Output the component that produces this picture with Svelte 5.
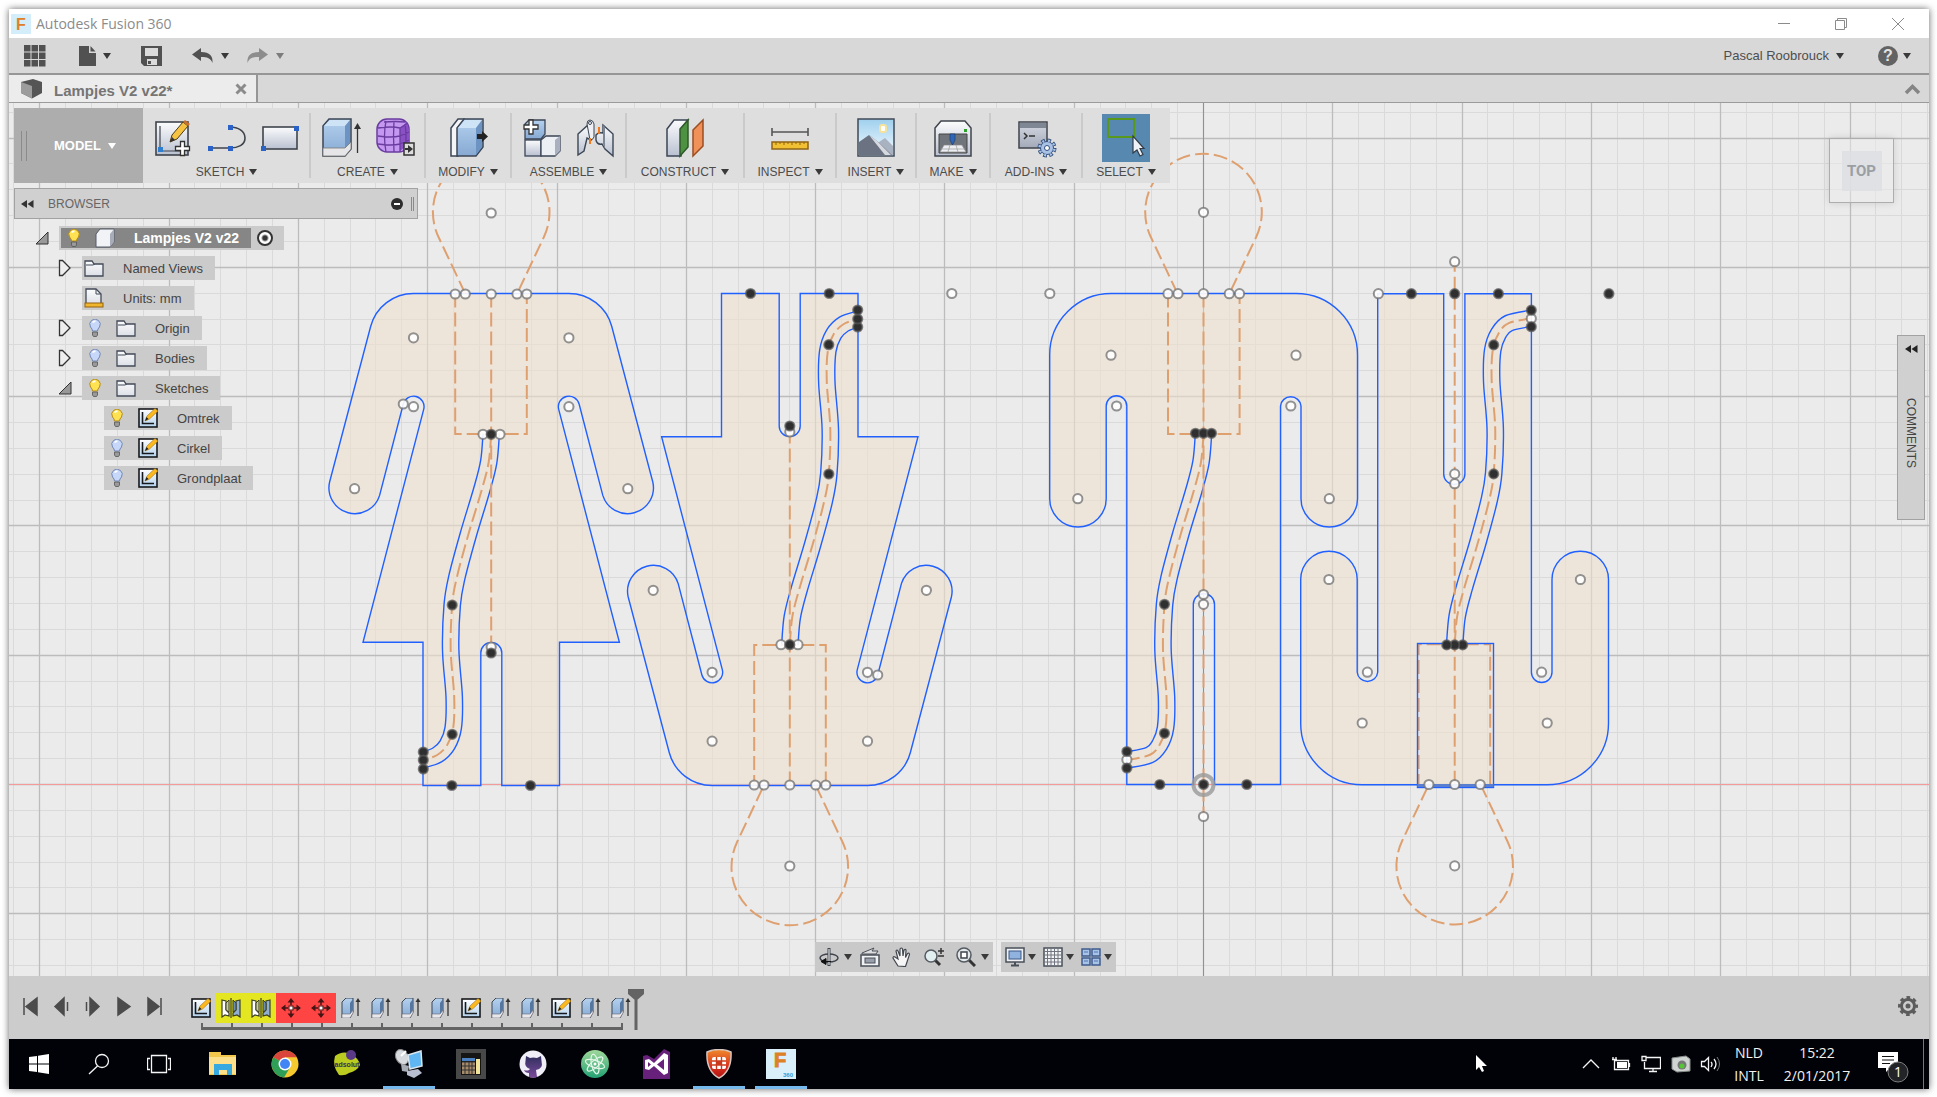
<script lang="ts">
	type Point = [number, number];

	const toolGroups = [
		{ label: 'SKETCH', width: 167, icons: ['sketch', 'line', 'rect'] },
		{ label: 'CREATE', width: 115, icons: ['extrude', 'form'] },
		{ label: 'MODIFY', width: 86, icons: ['press'] },
		{ label: 'ASSEMBLE', width: 115, icons: ['component', 'joint'] },
		{ label: 'CONSTRUCT', width: 118, icons: ['plane'] },
		{ label: 'INSPECT', width: 92, icons: ['measure'] },
		{ label: 'INSERT', width: 80, icons: ['image'] },
		{ label: 'MAKE', width: 74, icons: ['printer'] },
		{ label: 'ADD-INS', width: 92, icons: ['script'] },
		{ label: 'SELECT', width: 88, icons: ['select'] }
	];

	const tree = [
		{ label: 'Lampjes V2 v22', depth: 0, arrow: 'open', bulb: 'on', icon: 'cube', root: true },
		{ label: 'Named Views', depth: 1, arrow: 'closed', bulb: '', icon: 'folder' },
		{ label: 'Units: mm', depth: 1, arrow: '', bulb: '', icon: 'units' },
		{ label: 'Origin', depth: 1, arrow: 'closed', bulb: 'off', icon: 'folder' },
		{ label: 'Bodies', depth: 1, arrow: 'closed', bulb: 'off', icon: 'folder' },
		{ label: 'Sketches', depth: 1, arrow: 'open', bulb: 'on', icon: 'folder' },
		{ label: 'Omtrek', depth: 2, arrow: '', bulb: 'on', icon: 'smallSketch' },
		{ label: 'Cirkel', depth: 2, arrow: '', bulb: 'off', icon: 'smallSketch' },
		{ label: 'Grondplaat', depth: 2, arrow: '', bulb: 'off', icon: 'smallSketch' }
	];

	const features = [
		'smallSketch', 'mirror', 'mirror', 'move', 'move',
		'smallExtrude', 'smallExtrude', 'smallExtrude', 'smallExtrude', 'smallSketch',
		'smallExtrude', 'smallExtrude', 'smallSketch', 'smallExtrude', 'smallExtrude'
	];

	const playback = [
		{ label: 'Go to start', d: 'M3 2v17M5 10.5L16 2v17z' },
		{ label: 'Step back', d: 'M3 10.5L12 2v17zM15.5 6v9' },
		{ label: 'Step forward', d: 'M16 10.5L7 2v17zM3.5 6v9' },
		{ label: 'Play', d: 'M16 10.5L4 2v17z' },
		{ label: 'Go to end', d: 'M16 2v17M14 10.5L3 2v17z' }
	];

	const apps = [
		{ name: 'explorer', open: false },
		{ name: 'chrome', open: false },
		{ name: 'adsolut', open: false },
		{ name: 'remote', open: true },
		{ name: 'calculator', open: false },
		{ name: 'github', open: false },
		{ name: 'atom', open: false },
		{ name: 'visualstudio', open: false },
		{ name: 'shield', open: true },
		{ name: 'fusion', open: true }
	];

	// grid is centred on the sketch origin
	const origin = { x: 1203.5, y: 784.5 };
	const step = 25.86;

	function gridLines(start: number, from: number, to: number, major: boolean) {
		const lines: number[] = [];
		for (let n = -180; n <= 180; n++) {
			const pos = Math.floor(start + n * step) + 0.5;
			if ((n % 5 === 0) === major && pos > from && pos < to) lines.push(pos);
		}
		return lines;
	}

	function gridPath(major: boolean) {
		const v = gridLines(origin.x, 0, 3900, major).map((x) => `M${x} 0V2200`);
		const h = gridLines(origin.y, 0, 2200, major).map((y) => `M0 ${y}H3900`);
		return [...v, ...h].join('');
	}

	// catmull-rom through the points, as cubic segments
	function smooth(pts: Point[]) {
		let d = `M${pts[0][0]} ${pts[0][1]}`;
		for (let i = 0; i < pts.length - 1; i++) {
			const a = pts[Math.max(i - 1, 0)];
			const b = pts[i];
			const c = pts[i + 1];
			const e = pts[Math.min(i + 2, pts.length - 1)];
			d += `C${b[0] + (c[0] - a[0]) / 6} ${b[1] + (c[1] - a[1]) / 6} ${c[0] - (e[0] - b[0]) / 6} ${c[1] - (e[1] - b[1]) / 6} ${c[0]} ${c[1]}`;
		}
		return d;
	}

	function offset(pts: Point[], dist: number): Point[] {
		return pts.map((p, i) => {
			let dx = 0;
			let dy = 1;
			if (i === pts.length - 1) {
				dx = -1;
				dy = 0;
			} else if (i > 0) {
				dx = pts[i + 1][0] - pts[i - 1][0];
				dy = pts[i + 1][1] - pts[i - 1][1];
			}
			const len = Math.hypot(dx, dy);
			return [p[0] - (dy / len) * dist, p[1] + (dx / len) * dist];
		});
	}

	const cable: Point[] = [
		[0, 434], [-2.5, 462], [-9.5, 490], [-23, 535], [-34.5, 578], [-39, 605],
		[-40.5, 650], [-37, 697], [-38, 728], [-44, 745], [-54, 755]
	];

	const woman = 'M413.5 293.5H568.9A44.3 44.3 0 0 1 611.7 326.3L652.8 482A25.9 25.9 0 0 1 602.8 495.4L579.1 404A10.5 10.5 0 0 0 558.7 409.4L619.4 642.2H559.5V785.5H501.8V652.9A10.5 10.5 0 0 0 480.8 652.9V785.5H423V642.2H363L423.7 409.4A10.5 10.5 0 0 0 403.3 404L379.6 495.4A25.9 25.9 0 0 1 329.6 482L370.7 326.3A44.3 44.3 0 0 1 413.5 293.5Z';
	const man = 'M1111.3 293.5H1295.9A61.5 61.5 0 0 1 1357.5 355.2V498.7A28.2 28.2 0 0 1 1301 498.7V406A10.3 10.3 0 0 0 1280.5 406V784.5H1214.5V604.3A10.6 10.6 0 0 0 1193.3 604.3V784.5H1126.8V406A10.3 10.3 0 0 0 1106.2 406V498.7A28.2 28.2 0 0 1 1049.7 498.7V355.2A61.5 61.5 0 0 1 1111.3 293.5Z';

	const figures = [
		{
			outline: woman,
			cx: 491.2,
			cable: [...cable, [-68.2, 760]] as Point[],
			rect: [455.2, 71.6],
			axis: [293.5, 646],
			turn: 'rotate(180 640.5 539.5)',
			hollow: [
				[491.2, 213], [455.2, 294], [465.3, 294], [491.2, 294], [517, 294], [526.8, 294],
				[413.5, 337.8], [568.9, 337.8], [413.5, 406.7], [403.3, 404], [568.9, 406.7],
				[354.6, 488.7], [627.8, 488.7], [483, 434.3], [500, 434.3], [491.2, 647]
			],
			solid: [
				[491.2, 434.3], [452.2, 605], [452.2, 734.3], [423.3, 752], [423.3, 760], [423.3, 769],
				[451.8, 785.5], [530.5, 785.5], [491.2, 653]
			]
		},
		{
			outline: man,
			cx: 1203.5,
			cable: [...cable, [-76.7, 760]] as Point[],
			rect: [1168, 71.6],
			axis: [293.5, 816.5],
			turn: 'rotate(180 1329.1 539.1)',
			hollow: [
				[1203.5, 212.3], [1178, 293.7], [1203.5, 293.7], [1229.3, 293.7],
				[1111, 355.2], [1296, 355.2], [1116.6, 406], [1290.8, 406], [1077.8, 498.7], [1329.3, 498.7],
				[1203.5, 594.5], [1203.5, 604.3], [1126.9, 759.7], [1203.5, 816.5]
			],
			solid: [
				[1195.5, 433.3], [1203.5, 433.3], [1211.5, 433.3], [1164.5, 604.3], [1164.5, 733.3],
				[1126.9, 751.5], [1126.9, 768], [1159.8, 784.5], [1203.5, 784.5], [1246.8, 784.5]
			]
		}
	];

	const looseHollow = [[951.8, 293.5], [1049.8, 293.5], [1168, 293.7], [1239.5, 293.7], [1378.4, 293.7]];
</script>

{#snippet icon(name: string)}
	{#if name === 'sketch'}
		<svg viewBox="0 0 48 48" class="tool-icon">
			<rect x="7" y="8" width="32" height="33" fill="url(#pale)" stroke="#3f444c" stroke-width="1.6" />
			<path d="M11 12v25h22" fill="none" stroke="#3f444c" stroke-width="1.2" />
			<rect x="9" y="33" width="5" height="5" fill="#2f7fd0" />
			<path d="M21 28l2-7L34 8l5 4-11 13z" fill="#f5c242" stroke="#4a3a1a" />
			<path d="M34 8l2-2 5 4-2 2z" fill="#c8702c" /><path d="M21 28l2-5 3 3z" fill="#333" />
			<path d="M31.5 27.5h4v5h5v4h-5v5h-4v-5h-5v-4h5z" fill="#fff" stroke="#333" stroke-width="1.3" />
		</svg>
	{:else if name === 'line'}
		<svg viewBox="0 0 48 48" class="tool-icon">
			<path d="M7 34h20c8 0 15-3 15-10s-7-11-15-11" fill="none" stroke="#3f444c" stroke-width="1.6" />
			<rect x="5" y="32" width="5" height="5" fill="#2b62c8" /><rect x="25" y="32" width="5" height="5" fill="#2b62c8" />
			<rect x="25" y="11" width="5" height="5" fill="#2b62c8" />
		</svg>
	{:else if name === 'rect'}
		<svg viewBox="0 0 48 48" class="tool-icon">
			<rect x="6" y="13" width="34" height="22" fill="url(#pale)" stroke="#3f444c" stroke-width="1.6" />
			<rect x="4" y="32" width="5" height="5" fill="#2b62c8" /><rect x="37" y="12" width="5" height="5" fill="#2b62c8" />
		</svg>
	{:else if name === 'extrude'}
		<svg viewBox="0 0 48 48" class="tool-icon">
			<path d="M6 12l6-7h22v30l-6 7H6z" fill="url(#blue)" stroke="#3b4656" stroke-width="1.5" />
			<path d="M7 12l6-6h20l-5 6z" fill="#cfe3f6" /><path d="M28 12l5-6v28l-5 7z" fill="#6d93c2" />
			<path d="M6 34h22l6-6v7l-6 7H6z" fill="#e6e6e8" stroke="#777" stroke-width="0.8" />
			<path d="M40.5 39V13" stroke="#333" stroke-width="1.3" /><path d="M37 15l3.5-6 3.5 6z" fill="#333" />
		</svg>
	{:else if name === 'form'}
		<svg viewBox="0 0 48 48" class="tool-icon">
			<rect x="6" y="5" width="32" height="33" rx="10" fill="#c497f0" stroke="#6a3ca0" stroke-width="1.5" />
			<path d="M29 14l7-6 2 8v14l-9 7z" fill="#8a50c4" />
			<path d="M7 14q14-2 22 0l8-5M7 22q13 2 22 0l9-4M7 30q14 2 22 0l9-4M15 7q-3 15 0 31M23 7q-1 15 0 31M29 14v24M13 8q12-1 21 0M34 10q2 12 0 26" fill="none" stroke="#6a3ca0" stroke-width="1.3" />
			<rect x="33" y="29" width="10" height="12" fill="#ddd" stroke="#333" stroke-width="1.5" />
			<path d="M34 35h4" stroke="#333" stroke-width="2" /><path d="M37 31l5 4-5 4z" fill="#333" />
		</svg>
	{:else if name === 'press'}
		<svg viewBox="0 0 48 48" class="tool-icon">
			<path d="M7 14l7-9h6v28l-6 9H7z" fill="#f4f5f7" stroke="#3b4656" stroke-width="1.5" />
			<path d="M13 14l7-9h19v28l-7 9H13z" fill="url(#blue)" stroke="#3b4656" stroke-width="1.5" />
			<path d="M14 14l7-8h17l-6 8z" fill="#cfe3f6" /><path d="M32 14l6-8v27l-6 8z" fill="#6d93c2" />
			<path d="M33 20h5v-3l6 5.5-6 5.5v-3h-5z" fill="#222" />
		</svg>
	{:else if name === 'component'}
		<svg viewBox="0 0 48 48" class="tool-icon">
			<path d="M7 10l4-4h16v14l-4 5H7z" fill="url(#blue)" stroke="#3b4656" stroke-width="1.3" />
			<rect x="7" y="26" width="16" height="16" fill="url(#pale)" stroke="#3b4656" stroke-width="1.3" />
			<path d="M23 26l5-4h14v15l-5 5H23z" fill="#eceff4" stroke="#3b4656" stroke-width="1.3" />
			<path d="M37 26l5-4v15l-5 5z" fill="#aab0bf" />
			<path d="M11 6h4v5h5v4h-5v5h-4v-5H6v-4h5z" fill="#fff" stroke="#333" stroke-width="1.3" />
		</svg>
	{:else if name === 'joint'}
		<svg viewBox="0 0 48 48" class="tool-icon">
			<path d="M6 20l10-9 5 4v8l-2 3-4-2-3 13-6 4z" fill="url(#pale)" stroke="#3b4656" stroke-width="1.4" />
			<path d="M15 10q0-4 3-4t4 4v13q-1 3-4 3z" fill="#eef0f3" stroke="#3b4656" />
			<path d="M31 11l10 9v22l-8-7-3-5q-5 1-6-4v-5q2-3 7-2z" fill="url(#pale)" stroke="#3b4656" stroke-width="1.4" />
			<path d="M31 11v19l2 5V13z" fill="#7e8693" />
			<path d="M18 24v6M27 13v7" stroke="#f07a1c" stroke-width="2" /><circle cx="18" cy="9" r="1.5" fill="#fff" stroke="#3b4656" />
		</svg>
	{:else if name === 'plane'}
		<svg viewBox="0 0 48 48" class="tool-icon">
			<path d="M6 15l7-9h14l-7 9v27H6z" fill="url(#pale)" stroke="#3b4656" stroke-width="1.5" />
			<path d="M19 15l8-9v27l-8 9z" fill="#4d9243" stroke="#2f5a2a" stroke-width="1.5" />
			<path d="M32 16l10-10v26L32 42z" fill="#ef9159" stroke="#9c4d22" stroke-width="1.5" />
		</svg>
	{:else if name === 'measure'}
		<svg viewBox="0 0 48 48" class="tool-icon">
			<path d="M6 14v8M42 14v8M6 18h36" stroke="#555" stroke-width="1.6" fill="none" />
			<rect x="6" y="28" width="36" height="7" fill="#f2c133" stroke="#8e6415" stroke-width="1.5" />
			<path d="M10 28v3M14 28v2M18 28v3M22 28v2M26 28v3M30 28v2M34 28v3M38 28v2" stroke="#8e6415" />
		</svg>
	{:else if name === 'image'}
		<svg viewBox="0 0 48 48" class="tool-icon">
			<rect x="6" y="5" width="36" height="37" fill="url(#sky)" stroke="#3f4a58" stroke-width="1.5" />
			<rect x="28" y="11" width="6" height="7" rx="2" fill="#fff" stroke="#f6e29a" stroke-width="2" />
			<path d="M24 30l9-6 8 8v9H24z" fill="#a9b2c0" /><path d="M7 28l10-7 8 6 15 14H7z" fill="#6b7383" />
			<path d="M17 21l8 6 14 14h-6z" fill="#d6dae0" />
		</svg>
	{:else if name === 'printer'}
		<svg viewBox="0 0 48 48" class="tool-icon">
			<path d="M6 14l6-7h24l6 7v28H6z" fill="url(#pale)" stroke="#3f444c" stroke-width="1.5" />
			<path d="M10 20h28v19H10z" fill="#70747b" stroke="#444" /><path d="M15 31h18l4 7H11z" fill="#eceef2" stroke="#888" stroke-width="0.7" />
			<path d="M12 35h24M21 31l-2 7M27 31l2 7" stroke="#999" stroke-width="0.7" />
			<path d="M21 20h5v6l-2.5 5-2.5-5z" fill="#2f67b8" stroke="#1d3c70" stroke-width="0.7" /><rect x="35" y="15" width="3" height="3" fill="#2ba32b" />
		</svg>
	{:else if name === 'script'}
		<svg viewBox="0 0 48 48" class="tool-icon">
			<rect x="7" y="8" width="28" height="26" fill="url(#steel)" stroke="#3f444c" stroke-width="1.5" />
			<rect x="8" y="9" width="26" height="5" fill="#7f8794" /><path d="M12 19l3 3-3 3M17 22h6" fill="none" stroke="#333" stroke-width="1.5" />
			<circle cx="35" cy="34" r="7.5" fill="none" stroke="#34507c" stroke-width="4" stroke-dasharray="3.6 2.29" />
			<circle cx="35" cy="34" r="6.5" fill="#a9c2e6" stroke="#34507c" />
			<circle cx="35" cy="34" r="7.5" fill="none" stroke="#a9c2e6" stroke-width="2.4" stroke-dasharray="2 3.89" stroke-dashoffset="-0.8" />
			<circle cx="35" cy="34" r="2.5" fill="#fff" stroke="#34507c" />
		</svg>
	{:else if name === 'select'}
		<svg viewBox="0 0 48 48" class="tool-icon selected">
			<rect x="6" y="5" width="26" height="18" fill="none" stroke="#58991c" stroke-width="2" />
			<path d="M31 22v17l4-3 3 6 3-1.5-3-6h4z" fill="#eef2f6" stroke="#333b46" stroke-width="1.2" />
		</svg>
	{:else if name === 'cube'}
		<svg viewBox="0 0 20 20" class="small-icon">
			<path d="M1 6l4-5h14v13l-4 5H1z" fill="#f2f3f7" stroke="#555a66" /><path d="M15 6l4-5v13l-4 5z" fill="#a8acb8" />
		</svg>
	{:else if name === 'folder'}
		<svg viewBox="0 0 20 20" class="small-icon">
			<path d="M1 18V3h7l2 3h9v12z" fill="url(#folder)" stroke="#434a58" stroke-width="1.3" /><path d="M2 7h7l2-1" fill="none" stroke="#434a58" />
		</svg>
	{:else if name === 'units'}
		<svg viewBox="0 0 20 20" class="small-icon">
			<path d="M2 16V1h10l5 5v10z" fill="url(#folder)" stroke="#434a58" stroke-width="1.3" /><path d="M12 1v5h5" fill="none" stroke="#434a58" />
			<rect x="1" y="15" width="18" height="4" fill="#f0b72e" stroke="#94620f" />
		</svg>
	{:else if name === 'smallSketch'}
		<svg viewBox="0 0 20 20" class="small-icon">
			<rect x="1" y="1" width="18" height="18" fill="url(#page)" stroke="#16181c" stroke-width="1.6" />
			<path d="M4.5 4v11.5H16" fill="none" stroke="#16181c" stroke-width="1.6" />
			<path d="M7 13l2-5 8-7.5 3 2.5-8.5 8z" fill="#fbb91f" stroke="#a0701b" stroke-width="0.6" /><path d="M7 13l1.5-4 2 2z" fill="#222" />
		</svg>
	{:else if name === 'smallExtrude'}
		<svg viewBox="0 0 20 20" class="small-icon">
			<path d="M1 4l4-4h7v14l-3 6H1z" fill="url(#blue)" stroke="#3b4656" /><path d="M9 5l3-4v13l-3 5z" fill="#55779f" />
			<path d="M1 16h8l3-4v3l-3 5H1z" fill="#e8e8ea" stroke="#667" stroke-width="0.6" />
			<path d="M17 18V3" stroke="#333" stroke-width="1.3" /><path d="M14.5 4L17 0l2.5 4z" fill="#333" />
		</svg>
	{:else if name === 'mirror'}
		<svg viewBox="0 0 20 20" class="small-icon">
			<path d="M1 2l4 1v9l3 3v3l-4-1-3 2z" fill="#fff" stroke="#3d4022" stroke-width="1.2" /><path d="M5 5l3-3v12l-3-2z" fill="#c9cf9c" stroke="#3d4022" />
			<path d="M19 2l-4 1v9l-3 3v3l4-1 3 2z" fill="#8fb0d4" stroke="#3d4022" stroke-width="1.2" /><path d="M15 5l-3-3v12l3-2z" fill="#6e8fb5" stroke="#3d4022" />
			<path d="M10 0v20" stroke="#3d4022" stroke-width="1.2" />
		</svg>
	{:else if name === 'move'}
		<svg viewBox="0 0 20 20" class="small-icon">
			<path d="M10 0l3.5 4.5h-7zM10 20l3.5-4.5h-7zM0 10l4.5-3.5v7zM20 10l-4.5-3.5v7z" fill="#451515" />
			<path d="M10 3v4M10 13v4M3 10h4M13 10h4" stroke="#451515" stroke-width="1.5" /><rect x="8" y="8" width="4" height="4" fill="#fff" stroke="#451515" />
		</svg>
	{/if}
{/snippet}

{#snippet bulb(state: string)}
	<svg viewBox="0 0 14 18" class="bulb">
		<path d="M4.5 12q0-2-2-4a5.2 5.2 0 1 1 9 0q-2 2-2 4z" fill={state === 'on' ? '#ffe252' : '#c6d7fa'} stroke={state === 'on' ? '#b38a19' : '#7187b5'} />
		<path d="M4.5 3.5q1.5-1.5 3-1" stroke="#fff" stroke-width="1.5" fill="none" />
		<path d="M4.5 13h5v3l-1 1.5h-3l-1-1.5z" fill="#9a9a9a" stroke="#555" stroke-width="0.8" />
	</svg>
{/snippet}

{#snippet markers(hollow: number[][], solid: number[][])}
	{#each hollow as [x, y]}
		<circle cx={x} cy={y} r="4.6" class="hollow" />
	{/each}
	{#each solid as [x, y]}
		<circle cx={x} cy={y} r="4.6" class="solid" />
	{/each}
{/snippet}

<svg class="defs" aria-hidden="true">
	<defs>
		<linearGradient id="pale" x2="0" y2="1"><stop stop-color="#fbfcfd" /><stop offset="1" stop-color="#b9c0d0" /></linearGradient>
		<linearGradient id="folder" x2="0" y2="1"><stop stop-color="#fbfcfd" /><stop offset="1" stop-color="#dcdfe6" /></linearGradient>
		<linearGradient id="blue" x2="0" y2="1"><stop stop-color="#b5d1ee" /><stop offset="1" stop-color="#86a9d3" /></linearGradient>
		<linearGradient id="sky" x2="0" y2="1"><stop stop-color="#9fd0ee" /><stop offset="1" stop-color="#f4fbff" /></linearGradient>
		<linearGradient id="page" x2="0" y2="1"><stop stop-color="#ffffff" /><stop offset="1" stop-color="#b5d3ee" /></linearGradient>
		<linearGradient id="steel" x2="0" y2="1"><stop stop-color="#d5dae4" /><stop offset="1" stop-color="#a3a9b8" /></linearGradient>
		<linearGradient id="red" x2="0" y2="1"><stop stop-color="#ef8a2c" /><stop offset="0.6" stop-color="#d8301c" /><stop offset="1" stop-color="#b01414" /></linearGradient>
		<linearGradient id="green" x2="0" y2="1"><stop stop-color="#9fd89a" /><stop offset="1" stop-color="#23a274" /></linearGradient>
		<linearGradient id="purple" x2="0" y2="1"><stop stop-color="#30305e" /><stop offset="1" stop-color="#7b4a9c" /></linearGradient>
	</defs>
</svg>

<div class="window">
	<header class="title-bar">
		<svg viewBox="0 0 20 20" class="small-icon">
			<rect width="20" height="20" fill="#d3edfa" />
			<text x="5" y="16" class="f-logo">F</text>
		</svg>
		<span class="title">Autodesk Fusion 360</span>
		<div class="window-buttons">
			<button aria-label="Minimize"><svg viewBox="0 0 14 14"><path d="M1 6.5h12" /></svg></button>
			<button aria-label="Restore"><svg viewBox="0 0 14 14"><path d="M1.500 3.500h9v9h-9zM3.500 3.500v-2h9v9h-2" /></svg></button>
			<button aria-label="Close"><svg viewBox="0 0 14 14"><path d="M1 1l12 12M13 1L1 13" /></svg></button>
		</div>
	</header>

	<div class="app-bar">
		<button aria-label="Data panel"><svg width="22" height="22" fill="#515151"><path d="M0 0h6.5v6.5H0zM7.500 0H14v6.500H7.500zM15 0h6.500v6.500H15zM0 7.500h6.500V14H0zM7.500 7.500H14V14H7.500zM15 7.500h6.500V14H15zM0 15h6.500v6.500H0zM7.500 15H14v6.500H7.500zM15 15h6.500v6.500H15z" /></svg></button>
		<button class="file" aria-label="File"><svg width="17" height="21" fill="#515151"><path d="M0 1h10v7h7v13H0zM11.5 1l5 5.5h-5z" /></svg><i class="caret"></i></button>
		<button aria-label="Save"><svg width="21" height="21"><path d="M0 1h21v20H3l-3-3z" fill="#515151" /><path d="M4 3h13v8H4zM6 14h10v6H6z" fill="#dadada" /><path d="M7 16h3v3H7z" fill="#515151" /></svg></button>
		<button class="undo" aria-label="Undo"><svg width="22" height="18" fill="#515151"><path d="M0 7.5L9 1v4c9 0 12 4 11.5 11-2-5-5-6-11.5-6v4z" /></svg><i class="caret"></i></button>
		<button class="redo" aria-label="Redo"><svg width="22" height="18" fill="#8d8d8d"><path d="M21 7.500L12 1v4C3 5 0 9 .5 16c2-5 5-6 11.500-6v4z" /></svg><i class="caret faded"></i></button>
		<button class="user">Pascal Roobrouck<i class="caret"></i></button>
		<button class="help" aria-label="Help"><span>?</span><i class="caret"></i></button>
	</div>

	<div class="tab-bar">
		<div class="tab">
			<svg width="21" height="20"><path d="M0 3l12-3 9 3v11l-10 5.500L0 14z" fill="#555" /><path d="M0 3l11 4v12.500L0 14z" fill="#9c9c9c" /></svg>
			<span>Lampjes V2 v22*</span>
			<button aria-label="Close tab"><svg width="12" height="12"><path d="M1.5 1.5l9 9M10.5 1.5l-9 9" stroke="#8b8b8b" stroke-width="3" /></svg></button>
		</div>
		<button class="collapse" aria-label="Collapse"><svg width="17" height="12"><path d="M2 10l6.5-6.5L15 10" fill="none" stroke="#858585" stroke-width="3.5" /></svg></button>
	</div>

	<main>
		<svg class="canvas">
			<g transform="translate(-9 -103)">
				<path d={gridPath(false)} class="minor" />
				<path d={gridPath(true)} class="major" />
				<path d="M0 784.5H3900" stroke="#f49a9a" />
				<path d="M1203.5 0V2200" stroke="#8484f4" />
				{#each figures as figure}
					{#each ['', figure.turn] as turn}
						<g transform={turn}>
							<path d={figure.outline} class="outline" />
							<g transform="translate({figure.cx} 0)">
								<path d={smooth(offset(figure.cable, 8.2))} class="edge" />
								<path d={smooth(offset(figure.cable, -8.2))} class="edge" />
								<path d={smooth(figure.cable)} class="dashed" />
								<path d="M-26 293.5L-52.7 237A58.3 58.3 0 1 1 52.7 237L26 293.5" class="dashed" />
								<path d="M0 {figure.axis[0]}V{figure.axis[1]}" class="dashed" />
							</g>
							<path d="M{figure.rect[0]} 293.5v140.5h{figure.rect[1]}v-140.5" class="dashed" />
						</g>
					{/each}
				{/each}
				<rect x="1417.5" y="643.5" width="76" height="144" class="edge" />
				<path d="M1417.5 785.5h76" stroke="#5b7fd0" stroke-width="3" />
				<circle cx="1203.5" cy="785" r="10" class="origin" />
				{#each figures as figure}
					{#each ['', figure.turn] as turn}
						<g transform={turn}>{@render markers(figure.hollow, figure.solid)}</g>
					{/each}
				{/each}
				{@render markers(looseHollow, [[1608.9, 293.7]])}
			</g>
		</svg>

		<div class="toolbar">
			<button class="workspace"><span class="grip"></span>MODEL<i class="caret light"></i></button>
			{#each toolGroups as group}
				<div class="group" style="width: {group.width}px">
					<div class="icons">
						{#each group.icons as name}
							<button aria-label={name}>{@render icon(name)}</button>
						{/each}
					</div>
					<button class="group-label">{group.label}<i class="caret"></i></button>
				</div>
			{/each}
		</div>

		<aside class="browser">
			<div class="browser-head">
				<button aria-label="Collapse browser"><svg width="13" height="8"><path d="M6 0v8L0 4zM12.5 0v8l-6-4z" fill="#333" /></svg></button>
				<span>BROWSER</span>
				<button aria-label="Hide all"><svg width="12" height="12"><circle cx="6" cy="6" r="6" fill="#2d2d2d" /><path d="M3 6h6" stroke="#fff" stroke-width="2" /></svg></button>
				<span class="grip"></span>
			</div>
			<ul>
				{#each tree as node}
					<li class="depth-{node.depth}">
						<span class="arrow">
							{#if node.arrow === 'open'}
								<svg width="14" height="14"><path d="M13 1v12H1z" fill="#999" stroke="#333" /></svg>
							{:else if node.arrow === 'closed'}
								<svg width="14" height="18"><path d="M1.5 1.5h3l7.5 7.5-7.5 7.5h-3z" fill="#eee" stroke="#333" stroke-width="1.3" /></svg>
							{/if}
						</span>
						<div class="node" class:root={node.root}>
							<div class="node-inner">
								{#if node.bulb}{@render bulb(node.bulb)}{/if}
								{@render icon(node.icon)}
								<span>{node.label}</span>
							</div>
							{#if node.root}
								<input type="radio" name="active" checked aria-label="Activate component" />
							{/if}
						</div>
					</li>
				{/each}
			</ul>
		</aside>

		<button class="view-cube"><span>TOP</span></button>

		<button class="comments">
			<svg width="13" height="8"><path d="M6 0v8L0 4zM12.5 0v8l-6-4z" fill="#222" /></svg>
			<span>COMMENTS</span>
		</button>

		<div class="nav">
			<div class="nav-group">
				<button aria-label="Orbit"><svg width="20" height="20"><ellipse cx="10" cy="11" rx="9" ry="4" fill="none" stroke="#3f444c" stroke-width="1.5" /><path d="M10 1v18" stroke="#3f444c" stroke-width="3" /><path d="M10 2v16" stroke="#fff" /><path d="M2 14.5l5-3v6zM6 14.5h6" fill="#111" stroke="#111" /></svg><i class="caret"></i></button>
				<button aria-label="Look at"><svg width="20" height="20"><rect x="1" y="8" width="18" height="11" fill="#f1f2f4" stroke="#4a505a" stroke-width="1.5" /><rect x="5" y="11" width="10" height="5" fill="#9aa0ab" stroke="#4a505a" /><path d="M2 6l12-5-2 3h6l-2 3H2z" fill="#ddd" stroke="#4a505a" /></svg></button>
				<button aria-label="Pan"><svg width="20" height="20"><path d="M6 19l-5-8q0-2 2-1l3 2-2-8q1-2 2 0l2 5V2q1.500-2 2.500 0l.5 7 1-6q2-1.500 2 .5l-.5 7 2-4q2-1 2 1l-3 9-1 3z" fill="#f6f6f7" stroke="#43484f" stroke-width="1.2" /></svg></button>
				<button aria-label="Zoom"><svg width="20" height="20"><path d="M10 12l6 6" stroke="#333" stroke-width="3" /><circle cx="7" cy="9" r="6" fill="#e2eff0" stroke="#555b63" stroke-width="1.5" /><path d="M14 4h6M17 1v6M14 9h6" stroke="#333" stroke-width="1.5" /></svg></button>
				<button aria-label="Fit"><svg width="20" height="20"><path d="M13 13l6 6" stroke="#333" stroke-width="3" /><circle cx="8" cy="8" r="7" fill="#e3e8ea" stroke="#555b63" stroke-width="1.5" /><rect x="5" y="5" width="6" height="6" fill="#fff" stroke="#3f444c" stroke-width="1.5" /></svg><i class="caret"></i></button>
			</div>
			<div class="nav-group narrow">
				<button aria-label="Display settings"><svg width="20" height="20"><rect x="1" y="1" width="18" height="14" fill="#eef0f3" stroke="#4a505a" stroke-width="1.5" /><rect x="4" y="4" width="12" height="8" fill="#8fb2df" stroke="#3b5987" /><path d="M6 18.5h8M10 15v3" stroke="#4a505a" stroke-width="2" /></svg><i class="caret"></i></button>
				<button aria-label="Grid settings"><svg width="20" height="20"><rect x="1" y="1" width="18" height="18" fill="#f2f3f5" stroke="#4a505a" stroke-width="1.5" /><path d="M4.5 1v18M8 1v18M11.5 1v18M15 1v18M1 4.5h18M1 8h18M1 11.5h18M1 15h18" stroke="#70757f" /></svg><i class="caret"></i></button>
				<button aria-label="Viewports"><svg width="20" height="20"><path d="M1 2h8v7H1zM11 2h8v7h-8zM1 11h8v7H1zM11 11h8v7h-8z" fill="#a8c3e8" stroke="#3f5c8c" stroke-width="1.5" /><path d="M3 5h4M13 5h4M3 14h4M13 14h4" stroke="#7d9ccb" stroke-width="2" /></svg><i class="caret"></i></button>
			</div>
		</div>
	</main>

	<section class="timeline">
		<div class="playback">
			{#each playback as control}
				<button aria-label={control.label}><svg width="19" height="21"><path d={control.d} fill="#4b4b4b" stroke="#4b4b4b" stroke-width="1.5" /></svg></button>
			{/each}
		</div>
		<ol class="features">
			{#each features as name}
				<li class={name}>{@render icon(name)}</li>
			{/each}
		</ol>
		<svg class="playhead" width="16" height="42"><path d="M0 0h16v5l-8 7-8-7zM6.5 10h3v31h-3z" fill="#636363" /></svg>
		<button class="gear" aria-label="Timeline settings">
			<svg width="22" height="22"><circle cx="11" cy="11" r="6.5" fill="none" stroke="#5c5c5c" stroke-width="3" /><circle cx="11" cy="11" r="8.5" fill="none" stroke="#5c5c5c" stroke-width="3" stroke-dasharray="3.6 3.08" stroke-dashoffset="1.8" /><circle cx="11" cy="11" r="2.5" fill="#5c5c5c" /></svg>
		</button>
	</section>

	<footer class="taskbar">
		<button class="system" aria-label="Start"><svg width="20" height="20" fill="#fff"><path d="M0 3l8-1v7.5H0zM9 1.800L20 0v9.500H9zM0 10.500h8V18l-8-1zM9 10.500h11V20L9 18.300z" /></svg></button>
		<button class="system" aria-label="Search"><svg width="22" height="22"><circle cx="14" cy="8" r="6.5" class="thin" /><path d="M9.5 13L1 21" class="thin" /></svg></button>
		<button class="system" aria-label="Task view"><svg width="24" height="20"><path d="M4.5 1.5h15v17h-15zM3 4.5H.5v11H3M21 4.5h2.500v11H21" class="thin" /></svg></button>
		<div class="apps">
			{#each apps as app}
				<button class:open={app.open} aria-label={app.name}>
					<svg viewBox="0 0 30 30" width="30" height="30">
						{#if app.name === 'explorer'}
							<path d="M1 3h12v3h15v20H1z" fill="#f3c64c" /><path d="M1 8h27v17H1z" fill="#fce08c" /><path d="M6 26V15h18v11h-5v-5h-8v5z" fill="#35a9e0" />
						{:else if app.name === 'chrome'}
							<circle cx="15" cy="15" r="13.5" fill="#f6c92f" /><path d="M15 15L3.3 8.3a13.5 13.5 0 0 1 23.4 0H15z" fill="#d9453a" /><path d="M15 15L3.3 8.3A13.5 13.5 0 0 0 14 28.5l6-10z" fill="#2f9e57" />
							<circle cx="15" cy="15" r="6.5" fill="#fff" /><circle cx="15" cy="15" r="5" fill="#4285f4" />
						{:else if app.name === 'adsolut'}
							<path d="M3 7q6-5 14-3 10 5 11 12-3 6-11 8-4 3-10 2-7-9-4-19z" fill="#bccb1f" /><circle cx="19" cy="6" r="5" fill="#5a3a86" />
							<text x="15" y="18" class="adsolut">adsolut</text>
						{:else if app.name === 'remote'}
							<ellipse cx="8" cy="8" rx="6" ry="8" transform="rotate(-30 8 8)" fill="#d7dade" stroke="#888" /><path d="M14 6l13-4 1 15-12 3z" fill="#5fb6f2" stroke="#dbe7f0" stroke-width="1.5" />
							<path d="M7 15l8 2-1 6-6-1z" fill="#a8adb5" /><path d="M13 22l11-2 4 4-8 5-7-3z" fill="#b9bdd0" /><path d="M7 7l5-5" stroke="#fff" stroke-width="2" />
						{:else if app.name === 'calculator'}
							<path d="M0 0h30v30H0z" fill="#484848" /><path d="M5 4h20v22H5z" fill="#151515" /><path d="M6 9h13v3H6z" fill="#4a7fc0" /><path d="M6 13h13v12H6z" fill="#a88b6b" /><path d="M20 10h4v15h-4z" fill="#f0e59a" />
							<path d="M6 13h13M6 17h13M6 21h13M9 13v12M13 13v12M16 13v12" stroke="#333" />
						{:else if app.name === 'github'}
							<circle cx="15" cy="15" r="13.5" fill="#f0eef6" />
							<path d="M8 7l4 2q3-1 7 0l4-2 .5 5q2 8-5.500 9l1 7q-4 1.500-8 0v-4q-4 0-5-3 3 1 5 0l1-1q-6-2-4.500-8z" fill="url(#purple)" />
						{:else if app.name === 'atom'}
							<circle cx="15" cy="15" r="14" fill="url(#green)" />
							<g fill="none" stroke="#e5f5e8" stroke-width="1.2"><ellipse cx="15" cy="15" rx="3.5" ry="10" transform="rotate(-12 15 15)" /><ellipse cx="15" cy="15" rx="3.5" ry="10" transform="rotate(48 15 15)" /><ellipse cx="15" cy="15" rx="3.5" ry="10" transform="rotate(108 15 15)" /></g><circle cx="15" cy="15" r="1.5" fill="#fff" />
						{:else if app.name === 'visualstudio'}
							<path d="M1 7l4-1 7 4L22 0l6 3v27H1z" fill="#68217a" /><path d="M3 11l4-1 5 4 10-10 4 2v18l-4 2-10-9-5 4-4-1zM6 13v5l3-2.5zM22 10l-7 5.500 7 5.500z" fill="#fff" fill-rule="evenodd" />
						{:else if app.name === 'shield'}
							<path d="M3 3q12-5 24 0 1 19-12 26Q2 22 3 3z" fill="url(#red)" stroke="#d8c5c0" stroke-width="1.5" />
							<rect x="8" y="8" width="14" height="12" rx="2" fill="#fff" /><path d="M8 12h14M8 16h14M12.5 8v12M17.5 8v12" stroke="#c93a1c" stroke-width="1.4" /><path d="M12.5 12h5v4h-5z" fill="#c93a1c" />
						{:else}
							<path d="M0 0h30v30H0z" fill="#d9f0fb" /><text x="8" y="18" class="f-logo big">F</text><text x="17" y="28" class="f-360">360</text>
						{/if}
					</svg>
				</button>
			{/each}
		</div>
		<div class="tray">
			<button aria-label="Hidden icons"><svg width="18" height="12"><path d="M1 10l8-8 8 8" class="thin" /></svg></button>
			<button aria-label="Battery"><svg width="20" height="16"><path d="M3.5 4.5h14v9h-14zM18.5 7v4M1 3.5h5M2 1v3M5 1v3M3.5 4v4" class="thin" /><path d="M6 6h10v6H6z" fill="#fff" /></svg></button>
			<button aria-label="Network"><svg width="20" height="18"><path d="M5 2.5h14.500v11H3.500V7M1 1.5h4v4H1zM12 13v3M8 16.5h8" class="thin" /></svg></button>
			<button aria-label="Camera"><svg width="20" height="18"><path d="M1 3l14-2 4 3v12L6 17l-5-3z" fill="#cfd3d2" stroke="#868b8a" /><circle cx="11" cy="10" r="4.5" fill="#777" /><circle cx="11" cy="11" r="2.5" fill="#55c437" /></svg></button>
			<button aria-label="Volume"><svg width="22" height="18"><path d="M1.5 6.500h3l4-4v13l-4-4h-3zM11 7q2 2 0 5M14 4q4 5 0 10" class="thin" /><path d="M17 2q5 7 0 14" fill="none" stroke="#777" /></svg></button>
			<button class="language"><span>NLD</span><span>INTL</span></button>
			<button class="clock"><span>15:22</span><span>2/01/2017</span></button>
			<button class="notifications" aria-label="Notifications"><svg width="32" height="32"><path d="M1 1h20v16h-8l-4 4v-4H1z" fill="#fff" /><path d="M5 5.5h12M5 9h12M5 12.5h8" stroke="#111" /><circle cx="21" cy="21" r="10" fill="#222427" stroke="#7d7d7d" /><text x="21" y="26">1</text></svg></button>
		</div>
		<svg class="pointer" width="12" height="18"><path d="M0 0v15l3-3 3 5 2-1-2-5h5z" fill="#fff" /></svg>
	</footer>
</div>

<style>
	:global(body) {
		background: #fff;
		font-family: 'Liberation Sans', Arial, sans-serif;
	}

	button {
		display: flex;
		align-items: center;
		justify-content: center;
		padding: 0;
		border: none;
		background: none;
		color: inherit;
		font: inherit;
	}

	ul,
	ol {
		list-style: none;
		margin: 0;
		padding: 0;
	}

	.defs {
		position: absolute;
		width: 0;
		height: 0;
	}

	.window {
		display: flex;
		flex-direction: column;
		height: calc(100vh - 17px);
		margin: 9px 8px 8px 9px;
		box-shadow: 0 0 7px rgba(0, 0, 0, 0.6);
	}

	.caret {
		border: 4px solid transparent;
		border-top: 6px solid #3a3a3a;
		border-bottom: 0;
	}

	.caret.faded {
		border-top-color: #7d7d7d;
	}

	.caret.light {
		border-top-color: #fff;
	}

	.small-icon {
		width: 20px;
		height: 20px;
		flex-shrink: 0;
	}

	.tool-icon {
		display: block;
		width: 48px;
		height: 48px;
	}

	.tool-icon.selected {
		background: #5688b0;
	}

	.f-logo {
		font: bold 16px 'Liberation Sans', sans-serif;
		fill: #dd8127;
	}

	.f-logo.big {
		font-size: 20px;
		stroke: #dd8127;
	}

	.f-360 {
		font: bold 6px 'Liberation Sans', sans-serif;
		fill: #1f9fdc;
	}

	.adsolut {
		font: bold 7px 'Liberation Sans', sans-serif;
		fill: #3c2a5c;
		text-anchor: middle;
	}

	/* title and menus */
	.title-bar {
		display: flex;
		align-items: center;
		height: 29px;
		padding-left: 2px;
		background: #fff;
		flex-shrink: 0;
	}

	.title {
		margin-left: 5px;
		font: 14px 'Open Sans', sans-serif;
		color: #8b8b8b;
	}

	.window-buttons {
		display: flex;
		margin-left: auto;
		padding-right: 3px;
	}

	.window-buttons button {
		width: 57px;
	}

	.window-buttons svg {
		width: 14px;
		height: 14px;
		fill: none;
		stroke: #8b8b8b;
	}

	.app-bar {
		display: flex;
		align-items: center;
		height: 35px;
		padding: 0 18px 0 15px;
		background: #d8d8d8;
		border-bottom: 2px solid #969696;
		flex-shrink: 0;
	}

	.app-bar button + button {
		margin-left: 30px;
	}

	.app-bar .caret {
		margin-left: 7px;
	}

	.app-bar .file {
		margin-left: 33px;
	}

	.app-bar .redo {
		margin-left: 18px;
	}

	.app-bar .user {
		margin-left: auto;
		font-size: 13px;
		color: #4e4e4e;
	}

	.app-bar .help {
		margin-left: 34px;
	}

	.help span {
		width: 20px;
		border-radius: 10px;
		background: #636363;
		color: #e3e3e3;
		font-weight: bold;
		font-size: 16px;
		line-height: 20px;
	}

	.app-bar .help .caret {
		margin-left: 5px;
	}

	.tab-bar {
		display: flex;
		align-items: center;
		justify-content: space-between;
		height: 27px;
		background: #d8d8d8;
		border-bottom: 1px solid #9b9b9b;
		flex-shrink: 0;
	}

	.tab {
		display: flex;
		align-items: center;
		height: 27px;
		width: 249px;
		box-sizing: border-box;
		padding: 0 9px 0 12px;
		background: #ececec;
		border-right: 2px solid #969696;
		font-size: 15px;
		font-weight: bold;
		color: #757575;
	}

	.tab span {
		flex: 1;
		margin: 3px 0 0 12px;
	}

	.collapse {
		margin-right: 8px;
	}

	/* drawing area */
	main {
		position: relative;
		flex: 1;
		min-height: 0;
		padding: 5px;
		background: #ebebeb;
		overflow: hidden;
	}

	.canvas {
		position: absolute;
		inset: 0;
		width: 100%;
		height: 100%;
	}

	.minor {
		stroke: #dadada;
	}

	.major {
		stroke: #bcbcbc;
		stroke-width: 1.3;
	}

	.outline {
		fill: rgba(238, 225, 207, 0.6);
		stroke: #2060ff;
		stroke-width: 1.4;
	}

	.edge {
		fill: none;
		stroke: #2060ff;
		stroke-width: 1.4;
	}

	.dashed {
		fill: none;
		stroke: #dfa070;
		stroke-width: 2;
		stroke-dasharray: 14 5;
	}

	.hollow {
		fill: #fff;
		fill-opacity: 0.9;
		stroke: #707070;
		stroke-opacity: 0.75;
		stroke-width: 2;
	}

	.solid {
		fill: #2f2f2f;
		stroke: #555;
		stroke-opacity: 0.7;
		stroke-width: 2;
	}

	.origin {
		fill: none;
		stroke: #999;
		stroke-opacity: 0.8;
		stroke-width: 4;
	}

	.toolbar {
		position: relative;
		display: flex;
		width: max-content;
		height: 75px;
		background: #dedede;
	}

	.workspace {
		width: 129px;
		gap: 7px;
		background: #adadad;
		color: #fff;
		font-size: 13px;
		font-weight: bold;
	}

	.grip {
		width: 4px;
		border: 1px solid #8a8a8a;
		border-width: 0 1px;
	}

	.workspace .grip {
		height: 30px;
		margin: 0 20px 0 -20px;
	}

	.group {
		position: relative;
		display: flex;
		flex-direction: column;
		align-items: center;
		padding-top: 6px;
		box-sizing: border-box;
	}

	.group + .group::before {
		content: '';
		position: absolute;
		left: -1px;
		top: 5px;
		width: 2px;
		height: 65px;
		background: #cacaca;
	}

	.icons {
		display: flex;
		gap: 6px;
	}

	.group-label {
		gap: 5px;
		height: 20px;
		color: #4c4c4c;
		font-size: 12px;
	}

	/* browser tree */
	.browser {
		position: relative;
		width: 404px;
		margin-top: 5px;
	}

	.browser-head {
		display: flex;
		align-items: center;
		height: 31px;
		box-sizing: border-box;
		padding: 0 3px 0 6px;
		background: #d0d0d0;
		border: 1px solid #a2a2a2;
		font-size: 12px;
		color: #666;
	}

	.browser-head span:first-of-type {
		flex: 1;
		margin-left: 14px;
	}

	.browser-head .grip {
		height: 14px;
		width: 1px;
		margin-left: 8px;
	}

	.browser ul {
		display: flex;
		flex-direction: column;
		gap: 6px;
		padding-top: 7px;
	}

	.browser li {
		display: flex;
		align-items: center;
		height: 24px;
		padding-left: 21px;
	}

	.browser li.depth-1 {
		padding-left: 44px;
	}

	.browser li.depth-2 {
		padding-left: 66px;
	}

	.arrow {
		display: flex;
		width: 24px;
	}

	.node {
		display: flex;
		align-items: center;
		height: 24px;
		background: #cbcbcb;
		font-size: 13px;
		color: #444;
	}

	.node-inner {
		display: flex;
		align-items: center;
		height: 20px;
		padding: 0 12px 0 2px;
	}

	.node-inner span {
		margin-left: 19px;
	}

	.bulb {
		width: 14px;
		height: 18px;
		margin: 0 14px 0 4px;
	}

	.root {
		width: 225px;
	}

	.root .node-inner {
		margin-left: 2px;
		background: #868686;
		color: #fff;
		font-size: 14px;
		font-weight: bold;
	}

	.root input {
		appearance: none;
		width: 16px;
		height: 16px;
		margin: 0 0 0 6px;
		border: 2px solid #333;
		border-radius: 50%;
		background: radial-gradient(circle, #333 2px, #fff 4px);
	}

	.view-cube {
		position: absolute;
		top: 35px;
		right: 35px;
		width: 65px;
		height: 65px;
		background: rgba(235, 235, 235, 0.5);
		border: 1px solid #adadad;
		box-shadow: 0 0 8px rgba(0, 0, 0, 0.12);
	}

	.view-cube span {
		width: 40px;
		background: rgba(220, 223, 227, 0.8);
		color: #9b9ea3;
		font: bold 15px 'Roboto', sans-serif;
		line-height: 40px;
	}

	.comments {
		position: absolute;
		top: 232px;
		right: 4px;
		flex-direction: column;
		justify-content: flex-start;
		gap: 45px;
		width: 28px;
		height: 185px;
		padding-top: 9px;
		background: #d0d0d0;
		border: 1px solid #a2a2a2;
		color: #444;
		font-size: 12px;
	}

	.comments span {
		writing-mode: vertical-rl;
	}

	.nav {
		position: absolute;
		left: 42%;
		bottom: 4px;
		display: flex;
		gap: 8px;
	}

	.nav-group {
		display: flex;
		align-items: center;
		gap: 12px;
		height: 30px;
		padding: 0 8px 0 4px;
		background: #c9c9c9;
	}

	.nav-group button {
		gap: 5px;
	}

	.nav-group.narrow button {
		gap: 3px;
	}

	.nav-group .caret {
		margin-right: -4px;
	}

	.nav-group.narrow {
		gap: 11px;
	}

	/* timeline */
	.timeline {
		display: flex;
		align-items: flex-start;
		height: 63px;
		background: #ccc;
		flex-shrink: 0;
	}

	.playback {
		display: flex;
		gap: 12px;
		padding: 20px 0 0 12px;
	}

	.features {
		display: flex;
		margin: 17px 0 0 22px;
		padding-bottom: 7px;
		background: linear-gradient(#636363, #636363) 15px 100% / calc(100% - 28px) 3px no-repeat;
	}

	.features li {
		position: relative;
		display: flex;
		align-items: center;
		justify-content: center;
		width: 30px;
		height: 30px;
	}

	.features li::after {
		content: '';
		position: absolute;
		left: 15px;
		top: 30px;
		width: 2px;
		height: 5px;
		background: #636363;
	}

	.features .mirror {
		background: #e4e621;
	}

	.features .move {
		background: #ff4444;
	}

	.playhead {
		margin: 13px 0 0 -8px;
	}

	.gear {
		margin: 19px 10px 0 auto;
	}

	/* taskbar */
	.taskbar {
		position: relative;
		display: flex;
		height: 50px;
		background: #010207;
		color: #f2f2f2;
		flex-shrink: 0;
	}

	.thin {
		fill: none;
		stroke: #f5f5f5;
		stroke-width: 1.3;
	}

	.system {
		width: 60px;
	}

	.apps {
		display: flex;
		gap: 10px;
		margin-left: 8px;
	}

	.apps button {
		width: 52px;
		border-bottom: 3px solid transparent;
		border-top: 3px solid transparent;
	}

	.apps .open {
		border-bottom-color: #76b9ed;
	}

	.tray {
		display: flex;
		align-items: center;
		margin-left: auto;
		padding-right: 5px;
		font: 14px 'Open Sans', sans-serif;
		line-height: 23px;
	}

	.tray button {
		width: 30px;
		height: 50px;
	}

	.tray .language,
	.tray .clock {
		flex-direction: column;
	}

	.tray .language {
		width: 46px;
	}

	.tray .clock {
		width: 90px;
	}

	.tray .notifications {
		width: 62px;
		border-right: 1px solid #777;
	}

	.notifications svg {
		margin-top: 6px;
	}

	.notifications text {
		font: 14px 'Open Sans', sans-serif;
		fill: #fff;
		text-anchor: middle;
	}

	.pointer {
		position: absolute;
		left: 76.4%;
		top: 16px;
	}
</style>
